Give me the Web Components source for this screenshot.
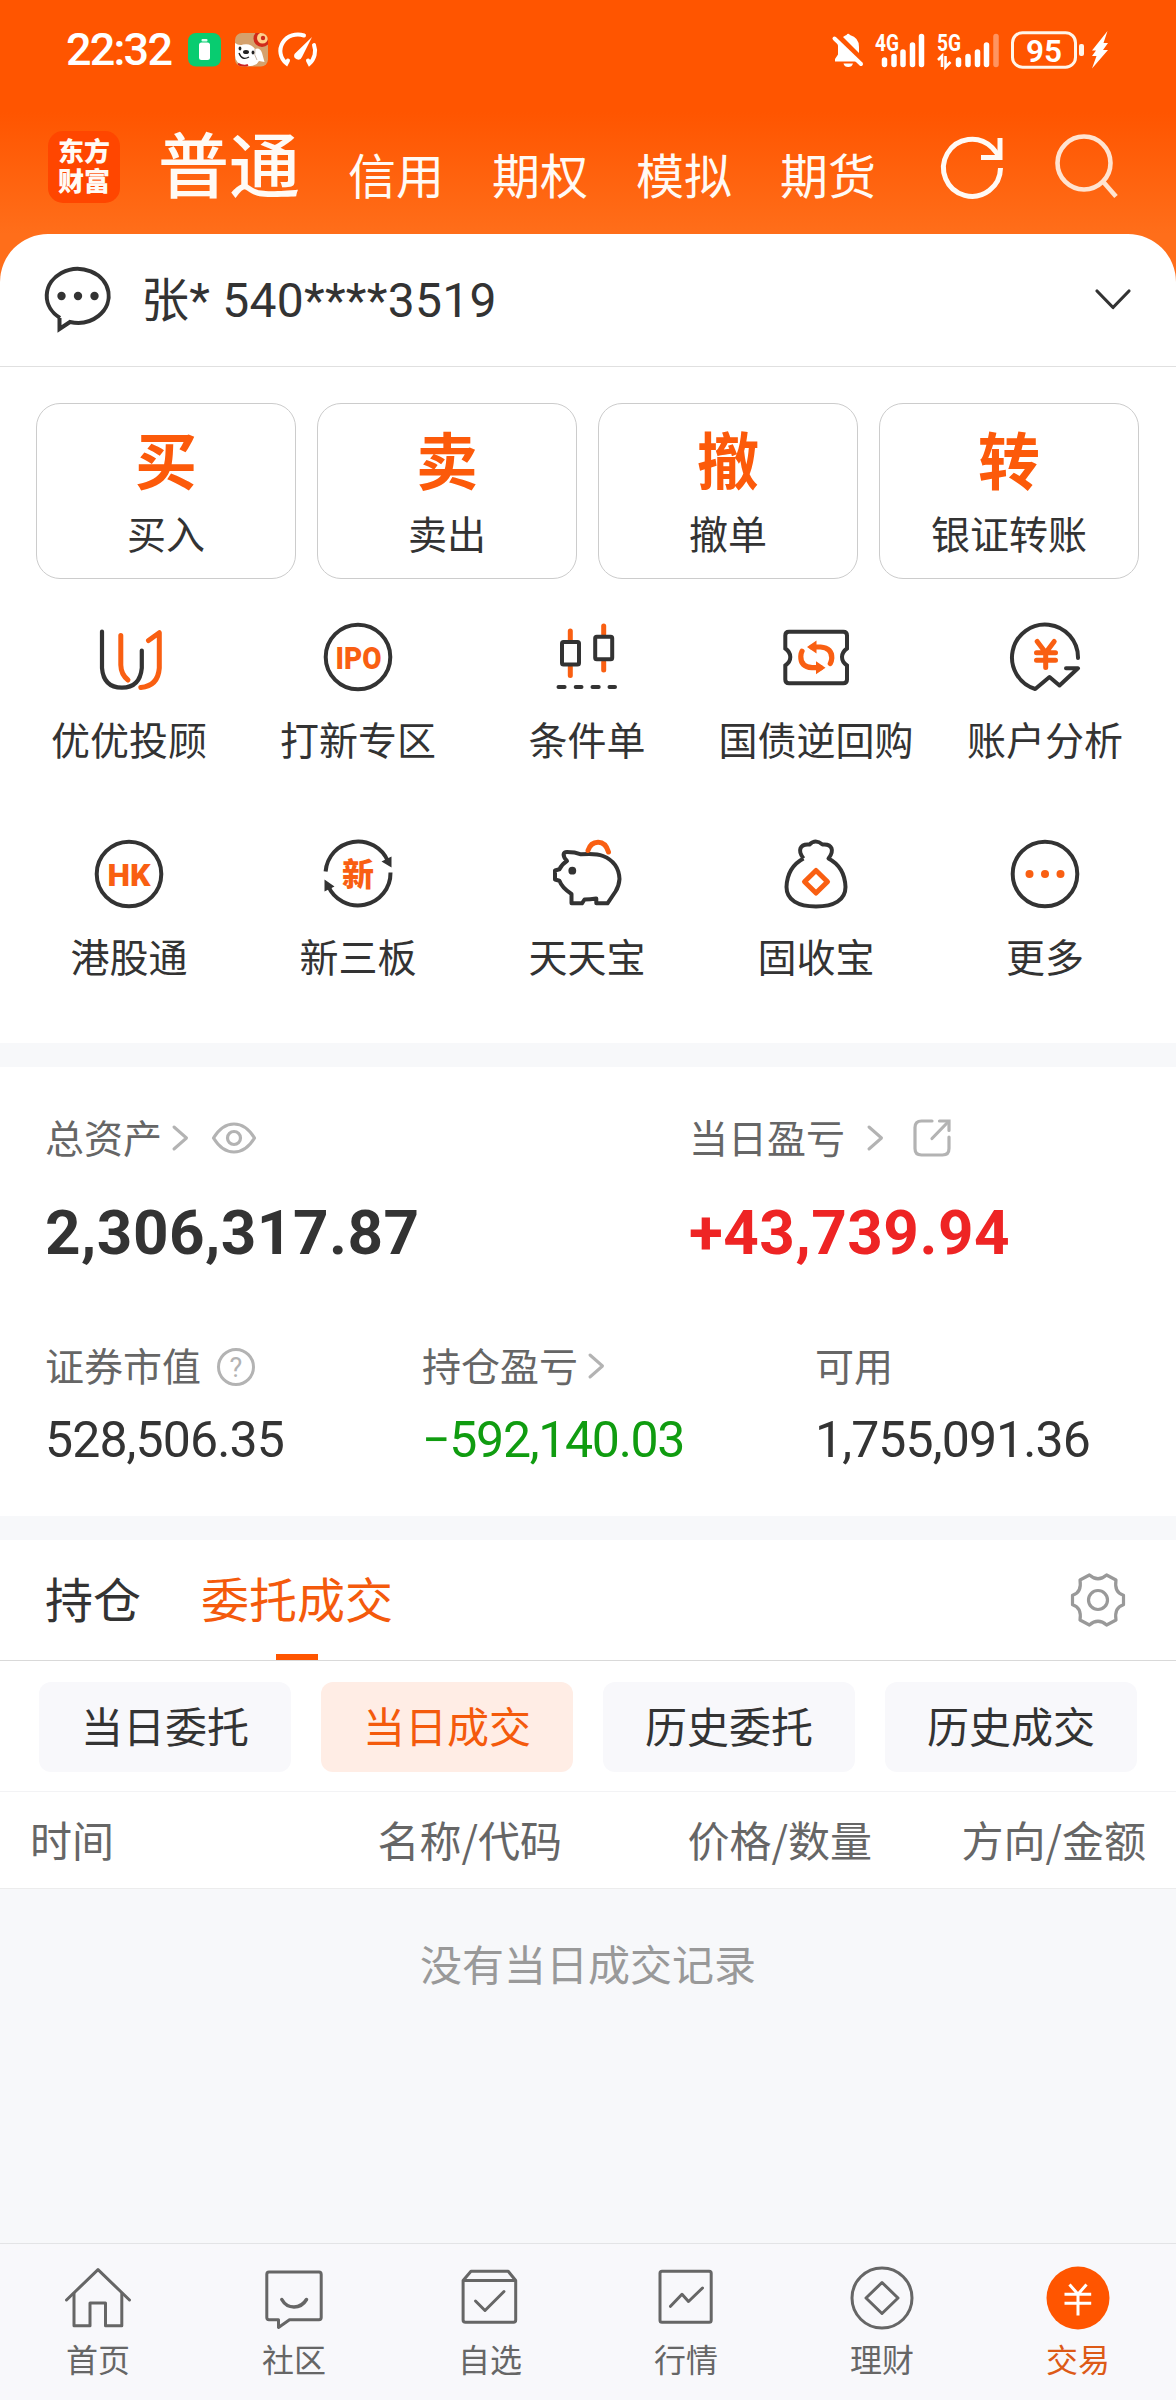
<!DOCTYPE html>
<html lang="zh-CN">
<head>
<meta charset="utf-8">
<meta name="viewport" content="width=device-width, initial-scale=1">
<title>交易</title>
<style>
    :root {
        --orange: #ff5500;
        --text: #333333;
        --text-2: #666666;
        --muted: #999999;
        --icon: #b3b3b3;
        --grey: #f7f8fa;
        --line: #e0e0e0;
        --cjk: 'Noto Sans CJK SC', sans-serif;
        --num: Roboto, 'Noto Sans CJK SC', sans-serif;
    }
    body {
        margin: 0;
        background: var(--grey);
        font-family: var(--cjk);
        color: var(--text);
    }
</style>
</head>
<body>
<trade-app></trade-app>

<script>
const ICONS = {
    refresh: [72, 72, `<g fill="none" stroke="#fffaf5" stroke-width="5"><path d="M64.5 37A28.5 28.5 0 1 1 56 16.500L64 26"/><path d="M64 7V26.500H45"/></g>`],
    search: [72, 72, `<g fill="none" stroke="#ffe3d0" stroke-width="4.600"><circle cx="33" cy="32" r="26.500"/><path d="M51.500 50L65 65.500"/></g>`],
    chat: [70, 70, `<path d="M17 54A31 27 0 1 1 27 58L16.500 65V54" fill="none" stroke="#333" stroke-width="4"/><g fill="#333"><circle cx="18.500" cy="32" r="4.200"/><circle cx="35" cy="32" r="4.200"/><circle cx="51.500" cy="32" r="4.200"/></g>`],
    down: [40, 24, `<path d="M4 4L20 20.500L36 4" fill="none" stroke="#333" stroke-width="3.200" stroke-linecap="round" stroke-linejoin="round"/>`],
    right: [18, 28, `<path d="M3 3L15.500 14L3 25" fill="none" stroke="#b3b3b3" stroke-width="3" stroke-linecap="round" stroke-linejoin="round"/>`],
    eye: [46, 34, `<g fill="none" stroke="#b3b3b3" stroke-width="3.200" stroke-linejoin="round"><path d="M2.500 17Q11 3 23 3T43.500 17Q35 31 23 31T2.500 17Z"/><circle cx="23" cy="17" r="6.500"/></g>`],
    share: [40, 40, `<g fill="none" stroke="#b3b3b3" stroke-width="3.200" stroke-linecap="round"><path d="M20 3H9.500Q3 3 3 9.500V30.500Q3 37 9.500 37H30.500Q37 37 37 30.500V19"/><path d="M27.500 3H37V12.500"/><path d="M20 20.500L36 4"/></g>`],
    help: [40, 40, `<circle cx="20" cy="20" r="17.500" fill="none" stroke="#b3b3b3" stroke-width="3"/><text x="20" y="29.500" text-anchor="middle" font-family="Roboto" font-size="27" fill="#b3b3b3">?</text>`],
    gear: [60, 60, `<g fill="none" stroke="#999" stroke-width="3.200" stroke-linejoin="round"><path d="M12 10L21.400 5Q30 12.500 38.600 5L48 10Q46 22.500 55.500 25.300V34.700Q46 37.500 48 50L38.600 55Q30 47.500 21.400 55L12 50Q14 37.500 4.500 34.700V25.300Q14 22.500 12 10Z"/><circle cx="30" cy="30" r="9.500"/></g>`],

    youyou: [80, 80, `<g fill="none" stroke-linecap="round" stroke-linejoin="round"><path d="M13 14.500V51Q14.500 70.500 32.900 70.700Q51 70.500 52.800 51V33.500" stroke="#333" stroke-width="4.200"/><g stroke="#f95f12" stroke-width="5"><path d="M31.800 18.500V48Q32 57.500 39 63"/><path d="M59.500 23.500L70.300 15.700V51Q69 69 51.800 70.500"/></g></g>`],
    ipo: [80, 80, `<circle cx="40" cy="40" r="32.300" fill="none" stroke="#333" stroke-width="4"/><text x="17.500" y="51.500" textLength="46" lengthAdjust="spacingAndGlyphs" font-family="Roboto" font-weight="900" font-size="32" fill="#f95f12">IPO</text>`],
    candles: [80, 80, `<g fill="none" stroke-linecap="round"><g stroke="#f95f12" stroke-width="5"><path d="M23.300 14V23M23.300 50V58.500M56.700 9V17M56.700 45V53"/></g><g stroke="#333" stroke-width="4"><rect x="15" y="25" width="17" height="22.500" rx="1.500"/><rect x="48.200" y="19.700" width="17" height="22.500" rx="1.500"/><path d="M11.500 70H17.600M28.700 70H34.500M45.500 70H51.700M62.500 70H68" /></g></g>`],
    repo: [80, 80, `<path d="M13 14.700H67.300Q71 14.700 71 18.500V31.500Q66 35 66 40T71 48.500V62.500Q71 66.300 67.300 66.300H13Q9.300 66.300 9.300 62.500V48.500Q14.300 45 14.300 40T9.300 31.500V18.500Q9.300 14.700 13 14.700Z" fill="none" stroke="#333" stroke-width="4"/><g fill="none" stroke="#f95f12" stroke-width="5.200" stroke-linecap="round"><path d="M36 30H44.500Q56 31 55.800 41Q55.500 44.500 54.300 46.500"/><path d="M44.500 50.700H36Q24.500 49.700 24.800 39.500Q25 36 26 34.300"/></g><path d="M31 30L40.500 23.500V36.500ZM49.500 50.700L40 44.200V57.200Z" fill="#f95f12"/>`],
    analysis: [80, 80, `<g fill="none" stroke="#333" stroke-width="4" stroke-linejoin="round" stroke-linecap="round"><path d="M73 41A33 33 0 1 0 30.200 72L44.500 60L54.500 68.500L73 51.300H61"/><path d="M32.200 24.500L40.700 35.700L49.200 24.500M31.500 35.700H50.500M31.500 43.300H50.500M40.700 36V50.500" stroke="#f95f12" stroke-width="5"/></g>`],
    hk: [80, 80, `<circle cx="40" cy="40" r="32.300" fill="none" stroke="#333" stroke-width="4"/><text x="18.500" y="51.500" textLength="43" lengthAdjust="spacingAndGlyphs" font-family="Roboto" font-weight="900" font-size="32" fill="#f95f12">HK</text>`],
    xin: [80, 80, `<g fill="none" stroke="#333" stroke-width="4"><path d="M7.600 37.500A32.500 32.500 0 0 1 70 27.500"/><path d="M72.500 38.500A32.500 32.500 0 0 1 10 51.500"/></g><path d="M63.500 27.500L73.500 22.500V33.500ZM16.500 52.500L6.500 57.500V45.500Z" fill="#333"/><text x="40" y="51.500" text-anchor="middle" font-family="Noto Sans CJK SC" font-weight="900" font-size="32" fill="#f95f12">新</text>`],
    pig: [80, 80, `<path d="M16.600 20.300Q17 18 20 18Q28 18 34 20.300C44 19.500 50 19.500 56 22C66 26 72 34 72.500 45Q72 52 68.500 57.500L60.500 69.300H49.300V64.500Q43 65.500 37.500 65.500L35 69.300H24.500V60Q15 54 12.400 46.700L8 45.500V36.500L12.400 35.300Q15 30 20 27Q16.500 23.500 16.600 20.300Z" fill="none" stroke="#333" stroke-width="4" stroke-linejoin="round"/><circle cx="25.300" cy="36.700" r="3.900" fill="#333"/><path d="M41 16.500Q43.500 8.500 51 8.300T61.500 18" fill="none" stroke="#f95f12" stroke-width="5" stroke-linecap="round"/>`],
    bag: [80, 80, `<path d="M27.500 24.500C21.500 17 23.500 9.500 33.500 10.500Q39.500 4.500 46.500 10.500C56.500 9.500 58.500 17 52.500 24.500C63 30 69 40 69.500 53C69.500 66 58 72.500 40 72.500S10.500 66 10.500 53C11 40 17 30 27.500 24.500" fill="none" stroke="#333" stroke-width="4" stroke-linejoin="round"/><path d="M40 36.500L51.500 47.700L40 59L28.500 47.700Z" fill="none" stroke="#f95f12" stroke-width="5" stroke-linejoin="round"/>`],
    more: [80, 80, `<circle cx="40" cy="40" r="32.300" fill="none" stroke="#333" stroke-width="4"/><g fill="#f95f12"><circle cx="24.500" cy="40" r="4"/><circle cx="40" cy="40" r="4"/><circle cx="55.500" cy="40" r="4"/></g>`],

    home: [72, 72, `<g fill="none" stroke="#666" stroke-width="3" stroke-linecap="round" stroke-linejoin="round"><path d="M4.500 38L36 7.700L67.500 38"/><path d="M12 31.500V63.700H28V41H43.500V63.700H59.800V31.500"/></g>`],
    community: [72, 72, `<g fill="none" stroke="#666" stroke-width="3" stroke-linejoin="round" stroke-linecap="round"><path d="M11 10H61Q63.200 10 63.200 12.500V55.500Q63.200 57.700 61 57.700H31.500L20.500 65.500V57.700H11Q8.800 57.700 8.800 55.500V12.500Q8.800 10 11 10Z"/><path d="M23.800 37.500Q28 45 36 45T48.500 37.500" stroke-width="3.500"/></g>`],
    watch: [72, 72, `<g fill="none" stroke="#666" stroke-width="3" stroke-linejoin="round" stroke-linecap="round"><path d="M9.100 18.500L17 9.300H54.200L61.700 18.500V58Q61.700 60.300 59.500 60.300H11.500Q9.100 60.300 9.100 58ZM9.100 18.500H61.700"/><path d="M21.500 39L31 48.500L50 29.500"/></g>`],
    market: [72, 72, `<g fill="none" stroke="#666" stroke-width="3" stroke-linejoin="round" stroke-linecap="round"><rect x="10" y="9.300" width="51.200" height="51" rx="2"/><path d="M20.500 44.300L32 32.300L38.500 39.500L52.500 26"/></g>`],
    wealth: [72, 72, `<g fill="none" stroke="#666" stroke-width="3" stroke-linejoin="round"><circle cx="36" cy="36" r="30"/><path d="M36 20.500L52 36L36 51.500L20 36Z"/></g>`],
    trade: [72, 72, `<circle cx="36" cy="36" r="31.500" fill="#ff5500"/><path d="M27.500 22.500L36 32.300L44.500 22.500M22.500 32.300H49.200M22.500 41.300H49.200M36 32.300V53.500" fill="none" stroke="#fff" stroke-width="3"/>`],

    power: [34, 34, `<rect width="33" height="33.500" rx="8" fill="#08cc70"/><rect x="13.500" y="6" width="6" height="2.500" rx="1" fill="#d9fff0"/><rect x="11" y="9.500" width="11" height="17.500" rx="2.500" fill="#fff"/>`],
    puppy: [34, 34, `<clipPath id="c"><rect width="33" height="33.500" rx="7"/></clipPath><g clip-path="url(#c)"><rect width="34" height="34" fill="#d5a16c"/><circle cx="27" cy="5.500" r="8.500" fill="#d02a1a"/><circle cx="27.500" cy="5" r="5.500" fill="#ffd08a"/><circle cx="28" cy="5" r="2.200" fill="#d02a1a"/><path d="M0 10Q4 13 8 11.500Q16 10 20 16Q25 14 27 20L29.500 29L24 28Q21 34 10 33Q0 31 0 22Z" fill="#fff"/><path d="M20 16Q18.500 22 22 27" fill="none" stroke="#c9b8a8" stroke-width="1"/><g fill="#222"><ellipse cx="5" cy="15.500" rx="1.400" ry="2"/><ellipse cx="18" cy="19.500" rx="1.400" ry="2"/><ellipse cx="11" cy="19" rx="3" ry="2"/></g><path d="M4 20Q7 28 14 24" fill="none" stroke="#222" stroke-width="1.400"/><path d="M3 31Q9 34 13 32" fill="none" stroke="#c22" stroke-width="2"/></g>`],
    gauge: [40, 36, `<g fill="none" stroke="#fff" stroke-width="4" stroke-linecap="round"><path d="M26 3.500A17.500 16.500 0 0 0 8.500 31.500L10 28.500"/><path d="M36 13A17 17 0 0 1 31.500 31.500L30 28.500"/></g><path d="M34 5L24 25A3.800 3.800 0 0 1 16.500 22Z" fill="#fff"/>`],
    bell: [32, 36, `<g fill="#fff"><path d="M4.500 9L27.500 29.500H3V27L6 22.500V14Q6 11 4.500 9Z"/><path d="M11 5Q13 3.500 14.500 3Q16 .5 18 3Q27 5.500 27 15V21Z"/><path d="M11.500 31.500H21Q20 35 16.200 35T11.500 31.500Z"/></g><path d="M2.500 6.500L29 32" stroke="#fff" stroke-width="4" stroke-linecap="round"/>`],
    sim1: [52, 36, `<text x="1" y="19" textLength="24" lengthAdjust="spacingAndGlyphs" font-family="Roboto" font-weight="700" font-size="23" fill="#fff">4G</text><g stroke="#fff" stroke-width="5.500" stroke-linecap="round"><path d="M10.500 28V32.500M20 24.500V32.500M29 20V32.500M38.500 13V32.500M47.500 4.500V32.500"/></g>`],
    sim2: [66, 36, `<text x="1" y="19" textLength="24" lengthAdjust="spacingAndGlyphs" font-family="Roboto" font-weight="700" font-size="23" fill="#fff">5G</text><path d="M2 28L6 24V35M9.500 24V35L14.500 30" fill="none" stroke="#fff" stroke-width="2.600"/><g stroke="#fff" stroke-width="5.500" stroke-linecap="round"><path d="M22.500 28V32.500M32 24.500V32.500M41.500 20V32.500M50.500 13V32.500"/><path d="M60 4.500V32.500" stroke="#ff9460"/></g>`],
    battery: [100, 40, `<rect x="2.500" y="2.700" width="63" height="34.500" rx="10" fill="none" stroke="#fff5ea" stroke-width="3"/><rect x="69" y="14" width="5" height="12" rx="2" fill="#fff5ea"/><text x="16" y="31.500" textLength="36" lengthAdjust="spacingAndGlyphs" font-family="Roboto" font-weight="600" font-size="32" fill="#fff">95</text><path d="M97.500 1L82 20.500H86L82 26H86.500L82 38.500L98 20H93L98 13H93.500Z" fill="#fff"/>`]
};

class AppIcon extends HTMLElement {
    connectedCallback() {
        const [w, h, body] = ICONS[this.getAttribute('name')];
        this.attachShadow({ mode: 'open' }).innerHTML = `
            <style>
                :host { display: block; flex: none; width: ${w}px; height: ${h}px; }
                svg { display: block; overflow: visible; }
            </style>
            <svg width="${w}" height="${h}" viewBox="0 0 ${w} ${h}">${body}</svg>
        `;
    }
}

class StatusBar extends HTMLElement {
    connectedCallback() {
        this.attachShadow({ mode: 'open' }).innerHTML = `
            <style>
                :host {
                    display: flex;
                    align-items: center;
                    height: 100px;
                    padding: 0 66px;
                    box-sizing: border-box;
                    color: #fff;
                }
                .time {
                    font: 500 45px/60px var(--num);
                    letter-spacing: -1.8px;
                    width: 122px;
                }
                .left, .right { display: flex; align-items: center; }
                .left { gap: 13px; }
                .right { margin-left: auto; }
            </style>
            <span class="time">22:32</span>
            <div class="left">
                <app-icon name="power"></app-icon>
                <app-icon name="puppy"></app-icon>
                <app-icon name="gauge" style="margin-left:-4px"></app-icon>
            </div>
            <div class="right">
                <app-icon name="bell"></app-icon>
                <app-icon name="sim1" style="margin-left:10px"></app-icon>
                <app-icon name="sim2" style="margin-left:10px"></app-icon>
                <app-icon name="battery" style="margin-left:8px"></app-icon>
            </div>
        `;
    }
}

class MarketHeader extends HTMLElement {
    connectedCallback() {
        this.attachShadow({ mode: 'open' }).innerHTML = `
            <style>
                :host {
                    display: flex;
                    align-items: center;
                    height: 134px;
                    padding: 0 53px 0 48px;
                    box-sizing: border-box;
                    color: #fffaf5;
                }
                .logo {
                    width: 72px;
                    height: 72px;
                    padding-top: 4px;
                    box-sizing: border-box;
                    border-radius: 15px;
                    background: #ff4600;
                    font-size: 26px;
                    font-weight: 900;
                    line-height: 30px;
                    text-align: center;
                }
                nav { display: flex; align-items: center; gap: 48px; margin-left: 38px; }
                b { font-weight: 500; font-size: 71px; line-height: 80px; margin-bottom: 12px; }
                ::slotted(span) { font-size: 48px; line-height: 60px; margin-top: 11px; }
                .tools { display: flex; gap: 43px; margin-left: auto; }
            </style>
            <div class="logo">东方<br>财富</div>
            <nav><b>${this.getAttribute('current')}</b><slot></slot></nav>
            <div class="tools">
                <app-icon name="refresh"></app-icon>
                <app-icon name="search"></app-icon>
            </div>
        `;
    }
}

class AccountBar extends HTMLElement {
    connectedCallback() {
        this.attachShadow({ mode: 'open' }).innerHTML = `
            <style>
                :host {
                    display: flex;
                    align-items: center;
                    height: 133px;
                    padding: 0 43px;
                    box-sizing: border-box;
                    border-bottom: 1px solid var(--line);
                    border-radius: 48px 48px 0 0;
                    background: #fff;
                }
                span { font: 400 48px/60px var(--num); letter-spacing: 0.25px; margin: 2px 0 0 28px; flex: 1; }
                .chat { margin-top: -2px; }
                .down { margin-top: -3px; }
            </style>
            <app-icon class="chat" name="chat"></app-icon>
            <span><slot></slot></span>
            <app-icon class="down" name="down"></app-icon>
        `;
    }
}

class TradeCard extends HTMLElement {
    connectedCallback() {
        this.attachShadow({ mode: 'open' }).innerHTML = `
            <style>
                :host {
                    display: flex;
                    flex-direction: column;
                    align-items: center;
                    flex: 1;
                    height: 176px;
                    padding-top: 19px;
                    box-sizing: border-box;
                    border: 1px solid #ccc;
                    border-radius: 24px;
                }
                .mark { font-size: 62px; line-height: 70px; font-weight: 700; color: #fc5a0a; }
                .label { font-size: 39px; line-height: 50px; margin-top: 14px; }
            </style>
            <div class="mark">${this.getAttribute('mark')}</div>
            <div class="label"><slot></slot></div>
        `;
    }
}

class FeatureItem extends HTMLElement {
    connectedCallback() {
        this.attachShadow({ mode: 'open' }).innerHTML = `
            <style>
                :host { display: flex; flex-direction: column; align-items: center; height: 217px; }
                .label { font-size: 39px; line-height: 50px; margin-top: 16px; white-space: nowrap; }
            </style>
            <app-icon name="${this.getAttribute('icon')}"></app-icon>
            <div class="label"><slot></slot></div>
        `;
    }
}

class AssetCell extends HTMLElement {
    connectedCallback() {
        this.attachShadow({ mode: 'open' }).innerHTML = `
            <style>
                :host { display: block; }
                .label { display: flex; align-items: center; height: 50px; font-size: 39px; line-height: 50px; color: var(--text-2); }
                ::slotted(app-icon) { margin-top: 4px; }
                .value { font: 400 50px/60px var(--num); letter-spacing: -0.9px; margin-top: 21px; white-space: nowrap; }
                :host([large]) .value { font: 700 62px/70px var(--num); letter-spacing: 0.5px; margin-top: 37px; }
                :host([trend=up]) .value { color: #ee2424; }
                :host([trend=down]) .value { color: #109c10; letter-spacing: -1.3px; }
            </style>
            <div class="label">${this.getAttribute('label')}<slot></slot></div>
            <div class="value">${this.getAttribute('value')}</div>
        `;
    }
}

class OrderTabs extends HTMLElement {
    connectedCallback() {
        this.attachShadow({ mode: 'open' }).innerHTML = `
            <style>
                :host {
                    display: flex;
                    height: 121px;
                    padding: 0 48px 0 45px;
                    box-sizing: border-box;
                    border-bottom: 1px solid #d9d9d9;
                    background: #fff;
                }
                ::slotted(span) {
                    display: flex;
                    font-size: 48px;
                    line-height: 114px;
                    margin-right: 60px;
                }
                ::slotted(.on) {
                    color: #f45a0c;
                    background: linear-gradient(var(--orange), var(--orange)) 50% 100% / 42px 6px no-repeat;
                }
                app-icon { margin: 30px 0 0 auto; }
            </style>
            <slot></slot>
            <app-icon name="gear"></app-icon>
        `;
    }
}

class PillButton extends HTMLElement {
    connectedCallback() {
        this.attachShadow({ mode: 'open' }).innerHTML = `
            <style>
                :host {
                    display: block;
                    flex: 1;
                    height: 90px;
                    border-radius: 12px;
                    background: #f8f8fb;
                    font-size: 42px;
                    line-height: 86px;
                    text-align: center;
                }
                :host([active]) { background: #ffede5; color: #f45a0c; }
            </style>
            <slot></slot>
        `;
    }
}

class NavItem extends HTMLElement {
    connectedCallback() {
        this.attachShadow({ mode: 'open' }).innerHTML = `
            <style>
                :host {
                    display: flex;
                    flex: 1;
                    flex-direction: column;
                    align-items: center;
                    padding-top: 18px;
                    font-size: 32px;
                    line-height: 40px;
                    color: var(--text-2);
                }
                :host([active]) { color: #dd5a17; }
                div { margin-top: 4px; }
            </style>
            <app-icon name="${this.getAttribute('icon')}"></app-icon>
            <div><slot></slot></div>
        `;
    }
}

class TradeApp extends HTMLElement {
    connectedCallback() {
        this.attachShadow({ mode: 'open' }).innerHTML = `
            <style>
                :host { display: flex; flex-direction: column; width: 1176px; height: 2400px; overflow: hidden; }
                .top { background: linear-gradient(#ff5500 0, #ff5500 112px, #ff6e1a 234px); }
                .cards { display: flex; gap: 21px; padding: 36px 37px 0 36px; background: #fff; }
                .features {
                    display: grid;
                    grid-template-columns: repeat(5, 229px);
                    justify-content: center;
                    height: 464px;
                    padding: 38px 2px 0 0;
                    box-sizing: border-box;
                    background: #fff;
                }
                .assets { height: 449px; margin: 24px 0; padding: 44px 0 0 45px; box-sizing: border-box; background: #fff; }
                .row { display: grid; grid-template-columns: 377px 393px 1fr; }
                .row.main { grid-template-columns: 644px 1fr; margin-bottom: 71px; }
                .pills { display: flex; gap: 30px; height: 131px; padding: 21px 39px 0; box-sizing: border-box; border-bottom: 1px solid #f3f3f5; background: #fff; }
                .thead {
                    display: grid;
                    grid-template-columns: 250px 282px 310px 1fr;
                    padding: 0 30px;
                    border-bottom: 1px solid #ececec;
                    background: #fff;
                    color: var(--text-2);
                    font-size: 42px;
                    line-height: 94px;
                    height: 97px;
                    box-sizing: border-box;
                    text-align: right;
                }
                .thead :first-child { text-align: left; }
                .empty { flex: 1; padding-top: 44px; font-size: 42px; line-height: 60px; color: var(--muted); text-align: center; }
                footer { display: flex; height: 157px; box-sizing: border-box; border-top: 1px solid #e3e4e6; background: #f8f8fb; }
            </style>
            <div class="top">
                <status-bar></status-bar>
                <market-header current="普通">
                    <span>信用</span><span>期权</span><span>模拟</span><span>期货</span>
                </market-header>
                <account-bar>张* 540****3519</account-bar>
            </div>
            <div class="cards">
                <trade-card mark="买">买入</trade-card>
                <trade-card mark="卖">卖出</trade-card>
                <trade-card mark="撤">撤单</trade-card>
                <trade-card mark="转">银证转账</trade-card>
            </div>
            <div class="features">
                <feature-item icon="youyou">优优投顾</feature-item>
                <feature-item icon="ipo">打新专区</feature-item>
                <feature-item icon="candles">条件单</feature-item>
                <feature-item icon="repo">国债逆回购</feature-item>
                <feature-item icon="analysis">账户分析</feature-item>
                <feature-item icon="hk">港股通</feature-item>
                <feature-item icon="xin">新三板</feature-item>
                <feature-item icon="pig">天天宝</feature-item>
                <feature-item icon="bag">固收宝</feature-item>
                <feature-item icon="more">更多</feature-item>
            </div>
            <div class="assets">
                <div class="row main">
                    <asset-cell large label="总资产" value="2,306,317.87">
                        <app-icon name="right" style="margin-left:9px"></app-icon>
                        <app-icon name="eye" style="margin-left:22px"></app-icon>
                    </asset-cell>
                    <asset-cell large trend="up" label="当日盈亏" value="+43,739.94">
                        <app-icon name="right" style="margin-left:21px"></app-icon>
                        <app-icon name="share" style="margin-left:28px"></app-icon>
                    </asset-cell>
                </div>
                <div class="row">
                    <asset-cell label="证券市值" value="528,506.35">
                        <app-icon name="help" style="margin-left:15px;margin-top:6px"></app-icon>
                    </asset-cell>
                    <asset-cell trend="down" label="持仓盈亏" value="−592,140.03">
                        <app-icon name="right" style="margin-left:9px"></app-icon>
                    </asset-cell>
                    <asset-cell label="可用" value="1,755,091.36"></asset-cell>
                </div>
            </div>
            <order-tabs><span>持仓</span><span class="on">委托成交</span></order-tabs>
            <div class="pills">
                <pill-button>当日委托</pill-button>
                <pill-button active>当日成交</pill-button>
                <pill-button>历史委托</pill-button>
                <pill-button>历史成交</pill-button>
            </div>
            <div class="thead"><span>时间</span><span>名称/代码</span><span>价格/数量</span><span>方向/金额</span></div>
            <div class="empty">没有当日成交记录</div>
            <footer>
                <nav-item icon="home">首页</nav-item>
                <nav-item icon="community">社区</nav-item>
                <nav-item icon="watch">自选</nav-item>
                <nav-item icon="market">行情</nav-item>
                <nav-item icon="wealth">理财</nav-item>
                <nav-item icon="trade" active>交易</nav-item>
            </footer>
        `;
    }
}

customElements.define('app-icon', AppIcon);
customElements.define('status-bar', StatusBar);
customElements.define('market-header', MarketHeader);
customElements.define('account-bar', AccountBar);
customElements.define('trade-card', TradeCard);
customElements.define('feature-item', FeatureItem);
customElements.define('asset-cell', AssetCell);
customElements.define('order-tabs', OrderTabs);
customElements.define('pill-button', PillButton);
customElements.define('nav-item', NavItem);
customElements.define('trade-app', TradeApp);
</script>
</body>
</html>
